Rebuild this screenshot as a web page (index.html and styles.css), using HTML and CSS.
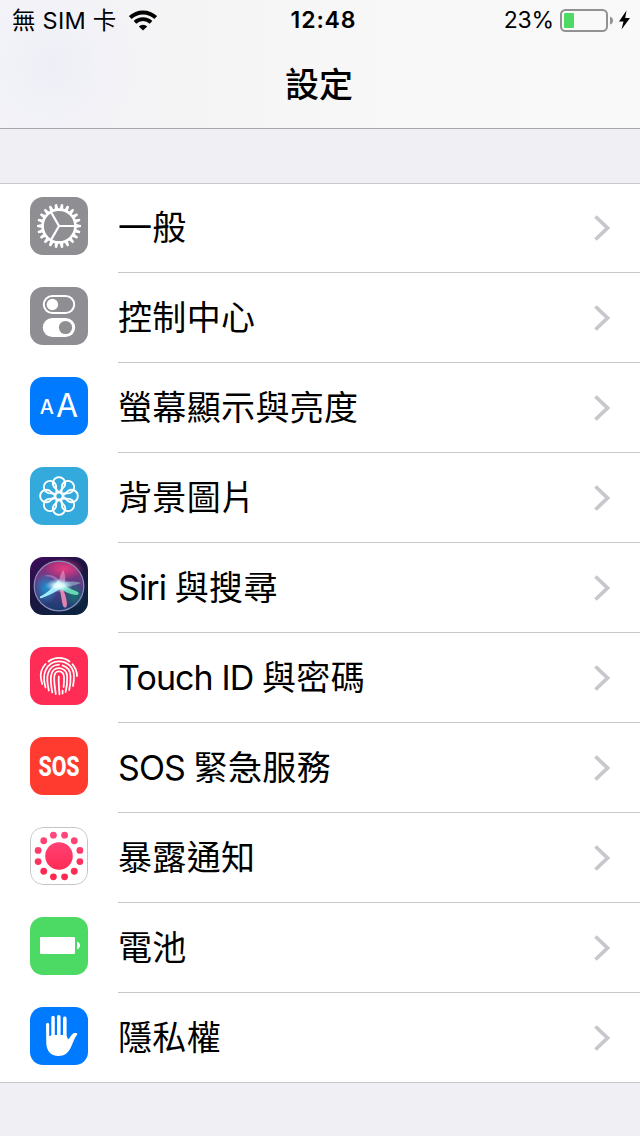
FILE: index.html
```html
<!DOCTYPE html>
<html lang="zh-Hant">
<head>
    <meta charset="UTF-8">
    <meta name="viewport" content="width=device-width, initial-scale=1.0">
    <title>設定</title>
    <link rel="stylesheet" href="styles.css">
</head>
<body>
    <header class="header">
        <div class="status-bar">
            <div class="status-left">
                <span class="carrier">無 SIM 卡</span>
                <svg class="wifi" width="28" height="21" viewBox="0 0 28 21">
                    <path d="M1.3 7.6A18.2 18.2 0 0 1 26.7 7.6" fill="none" stroke="#000" stroke-width="4"/>
                    <path d="M6 12.4A11.5 11.5 0 0 1 22 12.4" fill="none" stroke="#000" stroke-width="3.8"/>
                    <path d="M14 20.6L9.8 16.4A6 6 0 0 1 18.2 16.4Z"/>
                </svg>
            </div>
            <div class="clock">12:48</div>
            <div class="status-right">
                <span class="percent">23%</span>
                <svg width="71" height="24" viewBox="0 0 71 24">
                    <rect x="1" y="1" width="46" height="21" rx="4.5" fill="none" stroke="#929292" stroke-width="2"/>
                    <rect x="4" y="4" width="10" height="15" rx="1" fill="#4cd964"/>
                    <path d="M50 7.5Q53 8.5 53 11.5T50 15.5Z" fill="#929292"/>
                    <path d="M66.5 1.5L59 12.5H63.5L61.5 20.5L70 9H65.2Z"/>
                </svg>
            </div>
        </div>
        <h1 class="title">設定</h1>
    </header>

    <main class="settings-list">
        <a class="row">
            <svg class="icon gray" viewBox="0 0 58 58">
                <circle cx="29" cy="29" r="16.4" fill="none" stroke="#fff" stroke-width="2.6"/>
                <g id="gearTeeth" fill="#fff"></g>
                <path d="M29 29H45M29 29L21 15.1M29 29L21 42.9" stroke="#fff" stroke-width="2.2"/>
            </svg>
            <div class="row-body"><span>一般</span><svg class="chevron" viewBox="0 0 16 26"><path d="M1.5 1.5L13.5 13L1.5 24.5"/></svg></div>
        </a>
        <a class="row">
            <svg class="icon gray" viewBox="0 0 58 58">
                <rect x="13.8" y="9" width="30.4" height="17" rx="8.5" fill="none" stroke="#fff" stroke-width="2"/>
                <circle cx="22.4" cy="17.5" r="5.7" fill="#fff"/>
                <rect x="12.8" y="31" width="32.4" height="19" rx="9.5" fill="#fff"/>
                <circle cx="35.5" cy="40.5" r="6.6" fill="#8e8e93"/>
            </svg>
            <div class="row-body"><span>控制中心</span><svg class="chevron" viewBox="0 0 16 26"><path d="M1.5 1.5L13.5 13L1.5 24.5"/></svg></div>
        </a>
        <a class="row">
            <svg class="icon blue" viewBox="0 0 58 58">
                <text class="small-a" x="9.7" y="36.7">A</text>
                <text class="big-a" x="26" y="40">A</text>
            </svg>
            <div class="row-body"><span>螢幕顯示與亮度</span><svg class="chevron" viewBox="0 0 16 26"><path d="M1.5 1.5L13.5 13L1.5 24.5"/></svg></div>
        </a>
        <a class="row">
            <svg class="icon cyan" viewBox="0 0 58 58">
                <g id="petals" fill="none" stroke="#fff" stroke-width="1.8"></g>
                <circle cx="29" cy="29" r="3.4" fill="#34aadc" stroke="#fff" stroke-width="1.6"/>
            </svg>
            <div class="row-body"><span>背景圖片</span><svg class="chevron" viewBox="0 0 16 26"><path d="M1.5 1.5L13.5 13L1.5 24.5"/></svg></div>
        </a>
        <a class="row">
            <svg class="icon" viewBox="0 0 58 58">
                <defs>
                    <linearGradient id="siriBg" x1="0" y1="0" x2=".6" y2="1">
                        <stop offset="0" stop-color="#3f0d5c"/>
                        <stop offset=".5" stop-color="#1d1440"/>
                        <stop offset="1" stop-color="#0c2340"/>
                    </linearGradient>
                    <linearGradient id="siriOrb" x1="0" y1="0" x2="0" y2="1">
                        <stop offset="0" stop-color="#9c2b78"/>
                        <stop offset=".5" stop-color="#573f88"/>
                        <stop offset="1" stop-color="#173b70"/>
                    </linearGradient>
                    <radialGradient id="siriPink"><stop offset="0" stop-color="#e83c82"/><stop offset="1" stop-color="#e83c82" stop-opacity="0"/></radialGradient>
                    <radialGradient id="siriBlue"><stop offset="0" stop-color="#1b90cd"/><stop offset="1" stop-color="#1b90cd" stop-opacity="0"/></radialGradient>
                    <radialGradient id="siriTeal"><stop offset="0" stop-color="#13746f"/><stop offset="1" stop-color="#13746f" stop-opacity="0"/></radialGradient>
                    <radialGradient id="siriGlow"><stop offset="0" stop-color="#fff"/><stop offset=".4" stop-color="#d8ffff" stop-opacity=".85"/><stop offset="1" stop-color="#9df" stop-opacity="0"/></radialGradient>
                </defs>
                <rect width="58" height="58" fill="url(#siriBg)"/>
                <circle cx="29" cy="29" r="24.5" fill="url(#siriOrb)"/>
                <ellipse cx="34" cy="12" rx="20" ry="11" fill="url(#siriPink)"/>
                <ellipse cx="16" cy="31" rx="12" ry="16" fill="url(#siriBlue)"/>
                <ellipse cx="44" cy="38" rx="10" ry="13" fill="url(#siriTeal)"/>
                <circle cx="29" cy="29" r="24.8" fill="none" stroke="#8a8eb8" stroke-width="1.2"/>
                <path d="M29 28C25 22 21 19 14 19C21 16 29 20 33 28Z" fill="#b888cc" opacity=".6"/>
                <path d="M28 28C29 21 31 16 33 13C36 18 36 24 33 29Z" fill="#e7a0c8" opacity=".6"/>
                <path d="M31 26C38 24 45 24 51 26C46 28 38 30 31 30Z" fill="#94b4c4" opacity=".65"/>
                <path d="M28 23C22 32 17 36 10 39.5Q9 42 12 41C20 38 28 34 34 29Z" fill="#adf7ff" opacity=".9"/>
                <path d="M28 28C31 34 31 41 33 49Q36 53 37 48C37 41 34 34 31 28Z" fill="#f38cb5" opacity=".9"/>
                <path d="M30 26C36 30 43 33 48 35Q50 38 46 38C39 37 33 34 28 30Z" fill="#6ee6bc" opacity=".9"/>
                <ellipse cx="29" cy="28.5" rx="14" ry="7" fill="url(#siriGlow)"/>
            </svg>
            <div class="row-body"><span><span class="latin">Siri </span>與搜尋</span><svg class="chevron" viewBox="0 0 16 26"><path d="M1.5 1.5L13.5 13L1.5 24.5"/></svg></div>
        </a>
        <a class="row">
            <svg class="icon pink" viewBox="0 0 58 58">
                <g fill="none" stroke="#fff" stroke-width="1.75" stroke-linecap="round">
                    <path d="M18.5 14.5C24.5 9.8 33.5 9.8 39.5 14.5"/>
                    <path d="M15.5 17C11.5 21.5 10 26 11 31.5Q11.3 34 12.2 37"/>
                    <path d="M42.5 17.3C45.6 20.7 47 24.5 47 29"/>
                    <path d="M15.5 40.5C13.8 34.5 13.2 28 15.8 22.8C18.5 17.3 23.5 14.3 29 14.3C37.5 14.3 43.7 20.5 43.9 28.5C44 32 43.8 35.5 43 39"/>
                    <path d="M18.8 43.5C17.5 37.5 16.5 31.5 18 26.5C19.6 21 24 17.6 29 17.6"/>
                    <path d="M32.5 18.3C37.5 19.8 40.3 24 40.5 29C40.7 34 40.3 38.5 39.2 43"/>
                    <path d="M22.3 45.5C21.3 40 20.3 34.5 21 29C21.7 24 24.8 21 29 21C33.7 21 37 24.5 37.2 29.2C37.4 35 36.8 40.5 35.6 45"/>
                    <path d="M25.8 47C25 41.5 24 35.5 24.2 30C24.4 26.5 26.2 24.3 29 24.3C32 24.3 33.8 26.5 34 30C34.2 34 34 37 33.6 40"/>
                    <path d="M29.5 47.4C29 41.5 28.4 35.5 28.8 29.5"/>
                    <path d="M32.6 43.5V46.5"/>
                </g>
            </svg>
            <div class="row-body"><span><span class="latin">Touch ID </span>與密碼</span><svg class="chevron" viewBox="0 0 16 26"><path d="M1.5 1.5L13.5 13L1.5 24.5"/></svg></div>
        </a>
        <a class="row">
            <svg class="icon red" viewBox="0 0 58 58">
                <text class="sos" transform="translate(29 38.7) scale(0.79 1)">SOS</text>
            </svg>
            <div class="row-body"><span><span class="latin">SOS </span>緊急服務</span><svg class="chevron" viewBox="0 0 16 26"><path d="M1.5 1.5L13.5 13L1.5 24.5"/></svg></div>
        </a>
        <a class="row">
            <svg class="icon" viewBox="0 0 58 58">
                <defs>
                    <linearGradient id="exposure" gradientUnits="userSpaceOnUse" x1="0" y1="4" x2="0" y2="46">
                        <stop offset="0" stop-color="#ff4a81"/>
                        <stop offset="1" stop-color="#ff2951"/>
                    </linearGradient>
                </defs>
                <rect x=".5" y=".5" width="57" height="57" rx="12.5" fill="#fff" stroke="#c4c4c6"/>
                <g id="exposureDots" fill="url(#exposure)">
                    <circle cx="29" cy="29" r="13.8"/>
                </g>
            </svg>
            <div class="row-body"><span>暴露通知</span><svg class="chevron" viewBox="0 0 16 26"><path d="M1.5 1.5L13.5 13L1.5 24.5"/></svg></div>
        </a>
        <a class="row">
            <svg class="icon green" viewBox="0 0 58 58">
                <rect x="10" y="20" width="35" height="17" rx="1" fill="#fff"/>
                <path d="M47 24.8C51 25.5 51 31.5 47 32.2Z" fill="#fff"/>
            </svg>
            <div class="row-body"><span>電池</span><svg class="chevron" viewBox="0 0 16 26"><path d="M1.5 1.5L13.5 13L1.5 24.5"/></svg></div>
        </a>
        <a class="row">
            <svg class="icon blue" viewBox="0 0 58 58">
                <path fill="#fff" d="M16 17.3A1.6 1.6 0 0 1 19.2 17.3V29L21.3 28.5V10.6A1.7 1.7 0 0 1 24.8 10.6V28H27V9.8A1.8 1.8 0 0 1 30.6 9.8V28H33V11.4A1.8 1.8 0 0 1 36.6 11.4V28.5L38 32.5C40.5 30.5 41.5 26.5 44.6 26C46.5 25.6 48 26.5 47 27.8C44 31.5 43 36.5 40.3 41.5C38 46 34.5 49 28.5 49C20.5 49 16.8 43.5 16.3 37Z"/>
            </svg>
            <div class="row-body"><span>隱私權</span><svg class="chevron" viewBox="0 0 16 26"><path d="M1.5 1.5L13.5 13L1.5 24.5"/></svg></div>
        </a>
    </main>

    <script>
        // repeat a shape around the middle of a 58x58 icon
        function spin(id, count, offset, shape) {
            let html = '';
            for (let i = 0; i < count; i++) {
                html += `<g transform="translate(29 29) rotate(${offset + i * 360 / count})">${shape}</g>`;
            }
            document.getElementById(id).innerHTML += html;
        }

        spin('gearTeeth', 22, 90, '<path d="M-1.9 -17L-1.1 -22H1.1L1.9 -17Z"/>');
        spin('petals', 8, 0, '<path d="M0 -3.5L-5.4 -9.6A6.2 6.2 0 1 1 5.4 -9.6Z"/>');

        // the dots stay unrotated so they share the vertical gradient
        let dots = '';
        for (let i = 0; i < 12; i++) {
            const angle = (15 + i * 30) * Math.PI / 180;
            dots += `<circle cx="${29 + 21.6 * Math.cos(angle)}" cy="${29 + 21.6 * Math.sin(angle)}" r="3.4"/>`;
        }
        document.getElementById('exposureDots').innerHTML += dots;
    </script>
</body>
</html>
```
FILE: styles.css
```css
body {
    font-family: Inter, "Noto Sans CJK TC", sans-serif;
    background-color: #efeff4;
    color: #000;
    margin: 0;
    height: 1136px;
    overflow: hidden;
}

.header {
    box-sizing: border-box;
    height: 129px;
    border-bottom: 1px solid #a7a7ab;
    background: radial-gradient(circle at 54px 66px, #eeeef6 0, rgba(240, 240, 249, 0.6) 45px, transparent 85px),
        linear-gradient(90deg, #f3f3f8 0, #f4f4f5 180px, #f8f8f8 400px, #f9f9f9 100%);
}

.status-bar {
    display: grid;
    grid-template-columns: 1fr auto 1fr;
    align-items: center;
    height: 41px;
    padding: 0 9px 0 12px;
    font-size: 23px;
    line-height: 41px;
}

.status-left,
.status-right {
    display: flex;
    align-items: center;
}

.status-left {
    gap: 12px;
}

.status-right {
    justify-content: flex-end;
    gap: 6px;
}

.carrier {
    font-size: 23.5px;
    letter-spacing: 0.25px;
}

.percent {
    letter-spacing: -0.2px;
}

.clock {
    padding-left: 4px;
    font-weight: 600;
    letter-spacing: 0.9px;
}

.wifi {
    margin-bottom: 1px;
}

.title {
    margin: 16px 2px 0 0;
    font-size: 34px;
    font-weight: 500;
    line-height: 55px;
    text-align: center;
}

/* Settings rows */
.settings-list {
    margin-top: 54px;
    background-color: #fff;
}

.row {
    display: flex;
    box-sizing: border-box;
    height: 90px;
    padding-left: 30px;
}

.row:first-child {
    border-top: 1px solid #c8c7cc;
}

.row:last-child {
    border-bottom: 1px solid #c8c7cc;
}

.row:last-child .row-body {
    border-bottom: none;
}

.icon {
    flex: none;
    width: 58px;
    height: 58px;
    margin: 14px 30px 0 0;
    border-radius: 13px;
}

.row:first-child .icon {
    margin-top: 13px;
}

.row-body {
    display: flex;
    flex: 1;
    align-items: center;
    justify-content: space-between;
    padding-right: 30px;
    border-bottom: 1px solid #c8c7cc;
    font-size: 34px;
    font-weight: 400;
    letter-spacing: 0.35px;
    line-height: 50px;
}

.latin {
    letter-spacing: -0.9px;
}

.chevron {
    width: 16px;
    height: 26px;
    fill: none;
    stroke: #c7c7cc;
    stroke-width: 3.8;
}

.gray {
    background-color: #8e8e93;
}

.blue {
    background-color: #007aff;
}

.cyan {
    background-color: #34aadc;
}

.pink {
    background-color: #ff2d55;
}

.red {
    background-color: #ff3b30;
}

.green {
    background-color: #4cd964;
}

.small-a {
    fill: #fff;
    font-size: 20px;
    font-weight: 500;
}

.big-a {
    fill: #fff;
    font-size: 32px;
    font-weight: 400;
}

.sos {
    fill: #fff;
    font-family: Roboto, sans-serif;
    font-size: 27px;
    font-weight: 800;
    text-anchor: middle;
}
```
